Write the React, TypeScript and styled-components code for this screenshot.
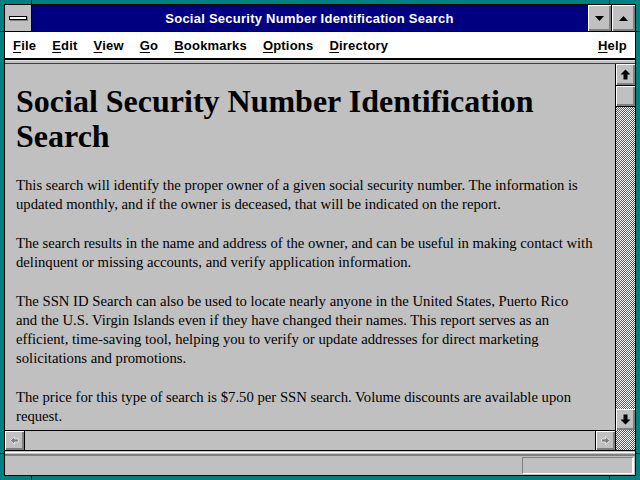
import React from "react";
import styled, { createGlobalStyle } from "styled-components";

const GlobalStyle = createGlobalStyle`
  html, body {
    margin: 0;
    padding: 0;
    width: 640px;
    height: 480px;
    overflow: hidden;
    background: #008080;
  }
`;

const TEAL = "#008080";
const FACE = "#c0c0c0";
const SHADOW = "#808080";

const MENU: { label: string; key: string }[] = [
  { label: "File", key: "F" },
  { label: "Edit", key: "E" },
  { label: "View", key: "V" },
  { label: "Go", key: "G" },
  { label: "Bookmarks", key: "B" },
  { label: "Options", key: "O" },
  { label: "Directory", key: "D" }
];

const Window = styled.div`
  position: relative;
  width: 640px;
  height: 480px;
  box-sizing: border-box;
  padding: 4px;
  background: ${TEAL};
`;

// little black notches in the sizing border, as Windows 3.1 draws them
const Tick = styled.span<{ $x?: number; $y?: number; $right?: boolean; $bottom?: boolean; $horiz?: boolean }>`
  position: absolute;
  background: #000;
  width: ${(p) => (p.$horiz ? "4px" : "1px")};
  height: ${(p) => (p.$horiz ? "1px" : "4px")};
  ${(p) => (p.$right ? "right: 0;" : p.$horiz ? "left: 0;" : `left: ${p.$x}px;`)}
  ${(p) => (p.$bottom ? "bottom: 0;" : p.$horiz ? `top: ${p.$y}px;` : "top: 0;")}
`;

const Frame = styled.div`
  height: 100%;
  box-sizing: border-box;
  border: 1px solid #000;
  background: ${FACE};
  display: flex;
  flex-direction: column;
`;

const TitleBar = styled.div`
  display: flex;
  height: 26px;
  border-bottom: 1px solid #000;
`;

const SysMenu = styled.div`
  width: 26px;
  background: ${FACE};
  border-right: 1px solid #000;
  display: flex;
  align-items: center;
  justify-content: center;
`;

const SysBar = styled.span`
  display: block;
  width: 16px;
  height: 2px;
  background: #fff;
  border: 1px solid #000;
  box-shadow: 1px 1px 0 ${SHADOW};
`;

const Caption = styled.div`
  flex: 1;
  background: #000080;
  color: #fff;
  font: bold 13px "Liberation Sans", Arial, sans-serif;
  letter-spacing: 0.25px;
  display: flex;
  align-items: center;
  justify-content: center;
`;

const CapButton = styled.div`
  width: 23px;
  border-left: 1px solid #000;
  background: ${FACE};
  box-shadow: inset 1px 1px 0 #fff, inset -1px -1px 0 ${SHADOW}, inset -2px -2px 0 ${SHADOW};
  display: flex;
  align-items: center;
  justify-content: center;
`;

const MenuBar = styled.div`
  display: flex;
  align-items: center;
  height: 26px;
  background: #fff;
  border-bottom: 2px solid #000;
  padding: 0 8px 0 8px;
  gap: 16px;
  font: bold 13px "Liberation Sans", Arial, sans-serif;
  letter-spacing: 0.2px;
  color: #000;
`;

const MenuItem = styled.span<{ $end?: boolean }>`
  margin-left: ${(p) => (p.$end ? "auto" : "0")};
  u {
    text-decoration-thickness: 1px;
    text-underline-offset: 2px;
  }
`;

const Rule = styled.div`
  height: 4px;
  background: ${FACE};
  border-top: 1px solid #dfdfdf;
  border-bottom: 1px solid #404040;
  box-sizing: border-box;
`;

const Viewport = styled.div`
  flex: 1;
  min-height: 0;
  display: grid;
  grid-template-columns: 1fr 20px;
  grid-template-rows: 1fr 21px;
`;

const Page = styled.div`
  overflow: hidden;
  padding: 20px 11px 0 11px;
  font: 14.7px "Liberation Serif", "Times New Roman", serif;
  color: #000;
  line-height: 19px;
`;

const Heading = styled.h1`
  margin: 0 0 22px;
  font: bold 32px/35px "Liberation Serif", "Times New Roman", serif;
`;

const Para = styled.p`
  margin: 0 0 20px;
`;

const dither = `repeating-conic-gradient(${TEAL} 0 25%, #fff 0 50%) 0 0 / 2px 2px`;

const VScroll = styled.div`
  border-left: 1px solid #000;
  display: flex;
  flex-direction: column;
  background: ${dither};
`;

const ScrollBtn = styled.div<{ $vertical?: boolean }>`
  flex: none;
  width: ${(p) => (p.$vertical ? "100%" : "19px")};
  height: ${(p) => (p.$vertical ? "21px" : "100%")};
  box-sizing: border-box;
  background: ${FACE};
  box-shadow: inset 1px 1px 0 #fff, inset -1px -1px 0 ${SHADOW}, inset -2px -2px 0 ${SHADOW};
  display: flex;
  align-items: center;
  justify-content: center;
`;

const Thumb = styled(ScrollBtn)`
  border-top: 1px solid #000;
  border-bottom: 1px solid #000;
  height: 22px;
`;

const Track = styled.div`
  flex: 1;
`;

const HScroll = styled.div`
  border-top: 1px solid #000;
  border-bottom: 1px solid #000;
  display: flex;
  background: ${FACE};
`;

const HTrack = styled.div`
  flex: 1;
  border-left: 1px solid #000;
  border-right: 1px solid #000;
`;

const Corner = styled.div`
  border-left: 1px solid #000;
  border-bottom: 1px solid #000;
  background: ${dither};
`;

const StatusRule = styled.div`
  height: 5px;
  box-sizing: border-box;
  border-top: 1px solid ${FACE};
  border-bottom: 2px solid ${SHADOW};
  background: #fff;
  background-clip: padding-box;
  position: relative;
  &::after {
    content: "";
    position: absolute;
    left: 0;
    right: 0;
    bottom: 0;
    height: 1px;
    background: ${FACE};
  }
`;

const StatusBar = styled.div`
  flex: none;
  height: 18px;
  display: flex;
  justify-content: flex-end;
  padding: 1px 1px 0 0;
`;

const StatusBox = styled.div`
  width: 109px;
  height: 15px;
  border-top: 1px solid ${SHADOW};
  border-left: 1px solid ${SHADOW};
  border-right: 2px solid #fff;
  border-bottom: 1px solid #fff;
`;

const Triangle = ({ up, color = "#000" }: { up?: boolean; color?: string }) => (
  <svg width="9" height="5" viewBox="0 0 9 5">
    <path d={up ? "M4.5 0L9 5H0Z" : "M0 0H9L4.5 5Z"} fill={color} />
  </svg>
);

const Arrow = ({ dir, color = "#000" }: { dir: "up" | "down" | "left" | "right"; color?: string }) => {
  const rot = { up: 0, right: 90, down: 180, left: 270 }[dir];
  return (
    <svg width="11" height="11" viewBox="0 0 11 11">
      <g transform={`rotate(${rot} 5.5 5.5)`}>
        <path d="M5.5 0.5L10.5 5.5H7.5V10.5H3.5V5.5H0.5Z" fill={color} />
      </g>
    </svg>
  );
};

const GreyArrow = ({ dir }: { dir: "left" | "right" }) => (
  <svg width="9" height="9" viewBox="0 0 9 9">
    <g transform={`rotate(${dir === "left" ? 270 : 90} 4.5 4.5)`}>
      <path d="M4.5 0.5L8.5 4.5H6V8.5H3V4.5H0.5Z" fill={SHADOW} stroke="#fff" strokeWidth="0.6" />
    </g>
  </svg>
);

export default function App(): JSX.Element {
  return (
    <Window>
      <GlobalStyle />
      <Tick $x={31} />
      <Tick $x={609} />
      <Tick $x={31} $bottom />
      <Tick $x={609} $bottom />
      <Tick $horiz $y={31} />
      <Tick $horiz $y={453} />
      <Tick $horiz $right $y={31} />
      <Tick $horiz $right $y={453} />
      <Frame>
        <TitleBar>
          <SysMenu>
            <SysBar />
          </SysMenu>
          <Caption>Social Security Number Identification Search</Caption>
          <CapButton>
            <Triangle />
          </CapButton>
          <CapButton>
            <Triangle up />
          </CapButton>
        </TitleBar>

        <MenuBar>
          {MENU.map((m) => (
            <MenuItem key={m.label}>
              <u>{m.key}</u>
              {m.label.slice(1)}
            </MenuItem>
          ))}
          <MenuItem $end>
            <u>H</u>elp
          </MenuItem>
        </MenuBar>
        <Rule />

        <Viewport>
          <Page>
            <Heading>Social Security Number Identification Search</Heading>
            <Para>
              This search will identify the proper owner of a given social security number. The information is
              updated monthly, and if the owner is deceased, that will be indicated on the report.
            </Para>
            <Para>
              The search results in the name and address of the owner, and can be useful in making contact with
              delinquent or missing accounts, and verify application information.
            </Para>
            <Para>
              The SSN ID Search can also be used to locate nearly anyone in the United States, Puerto Rico
              <br />
              and the U.S. Virgin Islands even if they have changed their names. This report serves as an
              <br />
              efficient, time-saving tool, helping you to verify or update addresses for direct marketing
              <br />
              solicitations and promotions.
            </Para>
            <Para>
              The price for this type of search is $7.50 per SSN search. Volume discounts are available upon
              request.
            </Para>
          </Page>

          <VScroll>
            <ScrollBtn $vertical>
              <Arrow dir="up" />
            </ScrollBtn>
            <Thumb $vertical />
            <Track />
            <ScrollBtn $vertical>
              <Arrow dir="down" />
            </ScrollBtn>
          </VScroll>

          <HScroll>
            <ScrollBtn>
              <GreyArrow dir="left" />
            </ScrollBtn>
            <HTrack />
            <ScrollBtn>
              <GreyArrow dir="right" />
            </ScrollBtn>
          </HScroll>
          <Corner />
        </Viewport>

        <StatusRule />
        <StatusBar>
          <StatusBox />
        </StatusBar>
      </Frame>
    </Window>
  );
}
